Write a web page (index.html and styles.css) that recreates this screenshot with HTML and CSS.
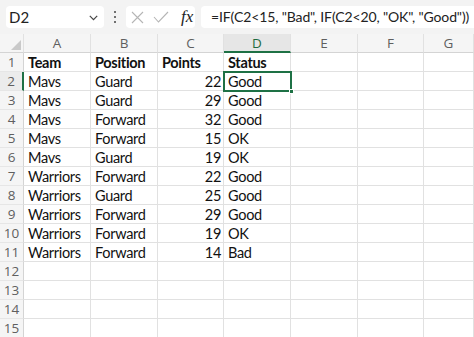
FILE: index.html
```html
<!DOCTYPE html>
<html>
<head>
<meta charset="utf-8">
<link rel="stylesheet" href="styles.css">
</head>
<body>
<div class="toolbar">
  <div class="namebox">
    <span class="name">D2</span>
    <svg class="chev" width="9" height="6" viewBox="0 0 9 6"><path d="M0.8 0.8 L4.5 4.6 L8.2 0.8" fill="none" stroke="#444" stroke-width="1.2"/></svg>
  </div>
  <div class="dots"><i></i><i></i><i></i></div>
  <div class="fxbox">
    <svg width="13" height="13" viewBox="0 0 13 13"><path d="M1 1 L12 12 M12 1 L1 12" stroke="#b5b5b5" stroke-width="1.1" fill="none"/></svg>
    <svg width="16" height="12" viewBox="0 0 16 12"><path d="M1 6 L5.5 11 L15 1" stroke="#b5b5b5" stroke-width="1.1" fill="none"/></svg>
    <span class="fx">fx</span>
  </div>
  <div class="formula">=IF(C2&lt;15, "Bad", IF(C2&lt;20, "OK", "Good"))</div>
</div>
<div class="grid">
  <div class="corner"><span class="tri"></span></div>
  <div class="ch">A</div><div class="ch">B</div><div class="ch">C</div><div class="ch sel">D</div><div class="ch">E</div><div class="ch">F</div><div class="ch">G</div>

  <div class="rh">1</div><div class="c b">Team</div><div class="c b">Position</div><div class="c b">Points</div><div class="c b">Status</div><div class="c"></div><div class="c"></div><div class="c"></div>
  <div class="rh rsel">2</div><div class="c">Mavs</div><div class="c">Guard</div><div class="c n">22</div><div class="c active">Good<span class="handle"></span></div><div class="c"></div><div class="c"></div><div class="c"></div>
  <div class="rh">3</div><div class="c">Mavs</div><div class="c">Guard</div><div class="c n">29</div><div class="c">Good</div><div class="c"></div><div class="c"></div><div class="c"></div>
  <div class="rh">4</div><div class="c">Mavs</div><div class="c">Forward</div><div class="c n">32</div><div class="c">Good</div><div class="c"></div><div class="c"></div><div class="c"></div>
  <div class="rh">5</div><div class="c">Mavs</div><div class="c">Forward</div><div class="c n">15</div><div class="c">OK</div><div class="c"></div><div class="c"></div><div class="c"></div>
  <div class="rh">6</div><div class="c">Mavs</div><div class="c">Guard</div><div class="c n">19</div><div class="c">OK</div><div class="c"></div><div class="c"></div><div class="c"></div>
  <div class="rh">7</div><div class="c">Warriors</div><div class="c">Forward</div><div class="c n">22</div><div class="c">Good</div><div class="c"></div><div class="c"></div><div class="c"></div>
  <div class="rh">8</div><div class="c">Warriors</div><div class="c">Guard</div><div class="c n">25</div><div class="c">Good</div><div class="c"></div><div class="c"></div><div class="c"></div>
  <div class="rh">9</div><div class="c">Warriors</div><div class="c">Forward</div><div class="c n">29</div><div class="c">Good</div><div class="c"></div><div class="c"></div><div class="c"></div>
  <div class="rh">10</div><div class="c">Warriors</div><div class="c">Forward</div><div class="c n">19</div><div class="c">OK</div><div class="c"></div><div class="c"></div><div class="c"></div>
  <div class="rh">11</div><div class="c">Warriors</div><div class="c">Forward</div><div class="c n">14</div><div class="c">Bad</div><div class="c"></div><div class="c"></div><div class="c"></div>
  <div class="rh">12</div><div class="c"></div><div class="c"></div><div class="c"></div><div class="c"></div><div class="c"></div><div class="c"></div><div class="c"></div>
  <div class="rh">13</div><div class="c"></div><div class="c"></div><div class="c"></div><div class="c"></div><div class="c"></div><div class="c"></div><div class="c"></div>
  <div class="rh">14</div><div class="c"></div><div class="c"></div><div class="c"></div><div class="c"></div><div class="c"></div><div class="c"></div><div class="c"></div>
  <div class="rh">15</div><div class="c"></div><div class="c"></div><div class="c"></div><div class="c"></div><div class="c"></div><div class="c"></div><div class="c"></div>
</div>
</body>
</html>
```
FILE: styles.css
```css
* { box-sizing: border-box; }
html, body { margin: 0; padding: 0; background: #fff; }
body { width: 474px; height: 337px; overflow: hidden; font-family: Lato, "Open Sans", sans-serif; }

.toolbar {
  height: 34px;
  background: #f3f3f3;
  display: flex;
  align-items: center;
  padding: 0 0 0 6px;
}
.namebox {
  width: 98px;
  height: 22px;
  background: #fff;
  border-radius: 4px;
  display: flex;
  align-items: center;
  justify-content: space-between;
  padding: 0 6px 0 3px;
}
.name { font-family: Lato, sans-serif; font-size: 15px; color: #222; }
.chev { margin-top: 1px; }
.dots {
  width: 22px;
  display: flex;
  flex-direction: column;
  align-items: center;
  gap: 2.5px;
}
.dots i { display: block; width: 2.5px; height: 2.5px; background: #444; border-radius: 50%; }
.fxbox {
  width: 69px;
  height: 22px;
  background: #fff;
  border-radius: 4px;
  display: flex;
  align-items: center;
  gap: 9px;
  padding: 0 0 0 5px;
}
.fx {
  font-family: "Liberation Serif", serif;
  font-style: italic;
  font-size: 17px;
  color: #222;
  margin-left: 3px;
}
.formula {
  margin-left: 6px;
  flex: 1;
  height: 22px;
  background: #fff;
  border-radius: 4px 0 0 4px;
  font-family: Lato, sans-serif;
  font-size: 14px;
  letter-spacing: -0.12px;
  line-height: 22px;
  color: #222;
  padding-left: 10px;
  white-space: nowrap;
  overflow: hidden;
}

.grid {
  display: grid;
  grid-template-columns: 24px 67px 67px 66px 67px 67px 66px 1fr;
  grid-template-rows: 19px repeat(15, 19px);
}
.corner, .ch {
  background: #f5f5f5;
  border-right: 1px solid #e1e1e1;
  border-bottom: 1px solid #d4d4d4;
  position: relative;
}
.ch {
  font-family: "Open Sans", sans-serif;
  font-size: 13.5px;
  color: #5f5f5f;
  text-align: center;
  line-height: 18px;
}
.ch.sel { background: #e6e6e6; border-bottom: 2px solid #1e7145; color: #1e6b40; }
.tri {
  position: absolute;
  right: 2px;
  bottom: 2px;
  width: 0; height: 0;
  border-left: 10px solid transparent;
  border-bottom: 10px solid #c9c9c9;
}
.rh {
  background: #f5f5f5;
  border-right: 1px solid #d4d4d4;
  border-bottom: 1px solid #e6e6e6;
  font-family: "Open Sans", sans-serif;
  font-size: 13.5px;
  color: #5f5f5f;
  text-align: center;
  line-height: 18px;
}
.rh.rsel { border-right: 2px solid #1e7145; background: #ececec; }
.c {
  border-right: 1px solid #e1e1e1;
  border-bottom: 1px solid #e1e1e1;
  font-size: 14.5px;
  letter-spacing: -0.3px;
  line-height: 19px;
  color: #111;
  padding-left: 4px;
  white-space: nowrap;
  position: relative;
}
.c.b { font-weight: bold; }
.c.n { text-align: right; padding-right: 2px; padding-left: 0; }
.c.active {
  outline: 2px solid #1e7145;
  outline-offset: -1px;
  z-index: 1;
}
.handle {
  position: absolute;
  right: -4px;
  bottom: -4px;
  width: 5px;
  height: 5px;
  background: #1e7145;
  border: 1px solid #fff;
}
```
